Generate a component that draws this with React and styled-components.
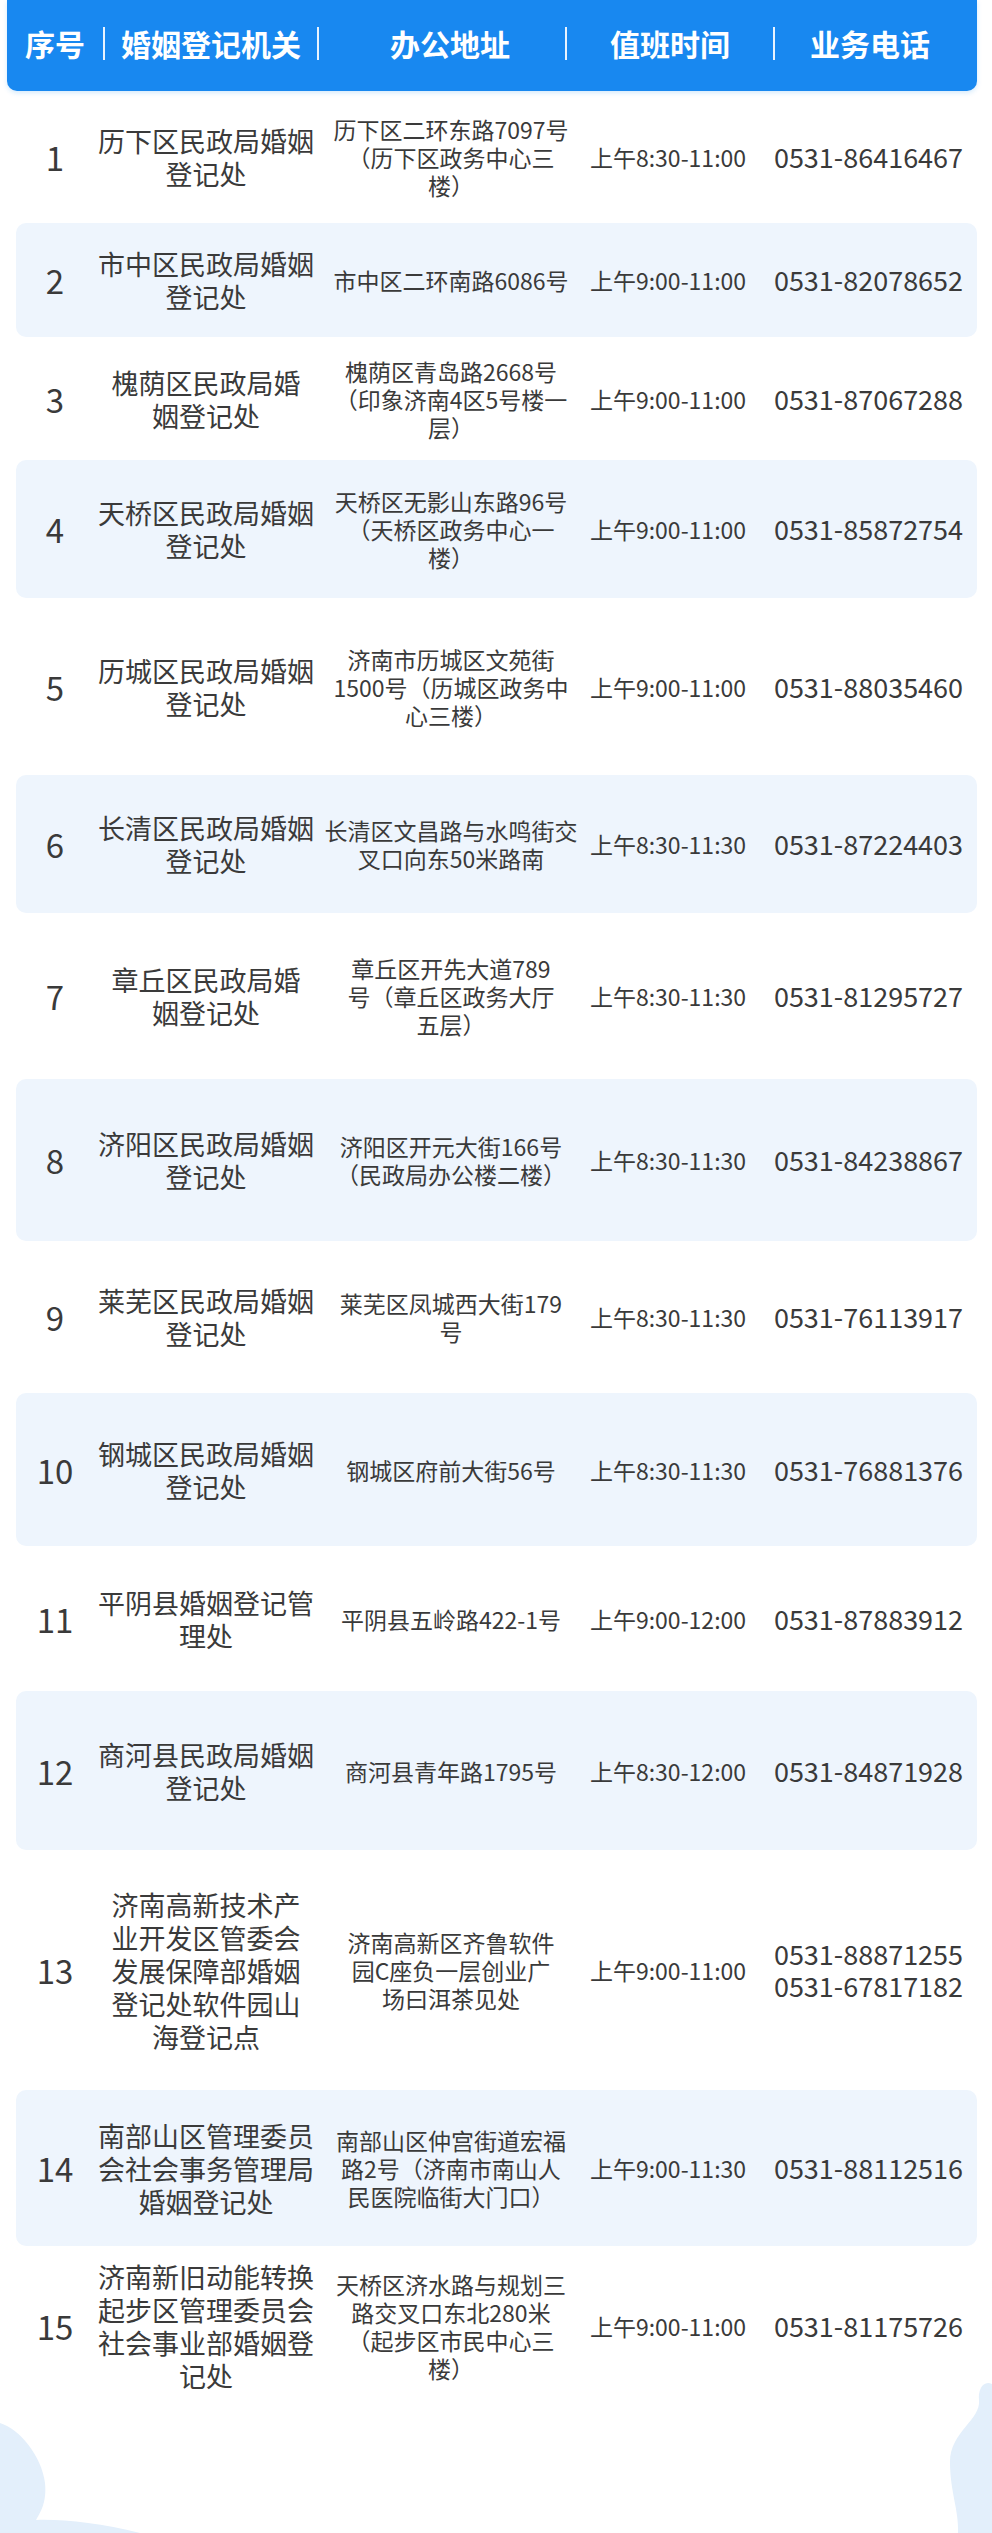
import React from 'react'
import styled, { createGlobalStyle } from 'styled-components'

const GlobalStyle = createGlobalStyle`
  html, body {
    margin: 0;
    padding: 0;
    background: #ffffff;
  }
  body {
    font-family: "Noto Sans CJK SC", "Noto Sans", sans-serif;
    color: #3a3a3a;
  }
`;

const Page = styled.div`
  width: 992px;
  min-height: 2533px;
  display: flex;
  flex-direction: column;
  background: #fff;
  overflow: hidden;
`;

// blue title bar
const Header = styled.div`
  display: grid;
  grid-template-columns: 96px 2px 212px 2px 246px 2px 206px 2px 1fr;
  align-items: center;
  height: 91px;
  padding-bottom: 5px;
  box-sizing: border-box;
  margin: 0 15px 0 7px;
  background: #1888f0;
  border-radius: 0 0 10px 10px;
  box-shadow: 0 2px 5px rgba(24, 136, 240, 0.18);
  color: #fff;
  font-size: 30px;
  font-weight: 700;
`;

const HeadCell = styled.div`
  text-align: center;
  white-space: nowrap;
  padding-left: ${props => props.$pl || 0}px;
  padding-right: ${props => props.$pr || 0}px;
`;

const Divider = styled.div`
  width: 2px;
  height: 33px;
  background: rgba(255, 255, 255, 0.9);
`;

const Row = styled.div`
  display: grid;
  grid-template-columns: 78px 224px 266px 168px 1fr;
  align-items: center;
  height: ${props => props.$h}px;
  margin: 0 15px 0 16px;
  border-radius: 10px;
  background: ${props => props.$shaded ? "#eef5fd" : "transparent"};
`;

const Num = styled.div`
  text-align: center;
  font-size: 33px;
  line-height: 40px;
`;

const Org = styled.div`
  text-align: center;
  font-size: 27px;
  line-height: 33px;
  white-space: nowrap;
`;

const Addr = styled.div`
  text-align: center;
  font-size: 23px;
  line-height: 28px;
  white-space: nowrap;
`;

const Time = styled.div`
  text-align: center;
  font-size: 23px;
  line-height: 28px;
  white-space: nowrap;
`;

const Tel = styled.div`
  text-align: center;
  font-size: 27px;
  line-height: 32px;
  white-space: nowrap;
  padding-left: 8px;
`;

const Line = styled.span`
  display: block;
`;

const Footer = styled.div`
  display: flex;
  justify-content: space-between;
  align-items: flex-end;
  height: 153px;
  margin-top: -26px;
`;

const rows = [
  { h: 132, org: ["历下区民政局婚姻", "登记处"], addr: ["历下区二环东路7097号", "（历下区政务中心三", "楼）"], time: "上午8:30-11:00", tel: ["0531-86416467"] },
  { h: 114, org: ["市中区民政局婚姻", "登记处"], addr: ["市中区二环南路6086号"], time: "上午9:00-11:00", tel: ["0531-82078652"] },
  { h: 123, org: ["槐荫区民政局婚", "姻登记处"], addr: ["槐荫区青岛路2668号", "（印象济南4区5号楼一", "层）"], time: "上午9:00-11:00", tel: ["0531-87067288"] },
  { h: 138, org: ["天桥区民政局婚姻", "登记处"], addr: ["天桥区无影山东路96号", "（天桥区政务中心一", "楼）"], time: "上午9:00-11:00", tel: ["0531-85872754"] },
  { h: 177, org: ["历城区民政局婚姻", "登记处"], addr: ["济南市历城区文苑街", "1500号（历城区政务中", "心三楼）"], time: "上午9:00-11:00", tel: ["0531-88035460"] },
  { h: 138, org: ["长清区民政局婚姻", "登记处"], addr: ["长清区文昌路与水鸣街交", "叉口向东50米路南"], time: "上午8:30-11:30", tel: ["0531-87224403"] },
  { h: 166, org: ["章丘区民政局婚", "姻登记处"], addr: ["章丘区开先大道789", "号（章丘区政务大厅", "五层）"], time: "上午8:30-11:30", tel: ["0531-81295727"] },
  { h: 162, org: ["济阳区民政局婚姻", "登记处"], addr: ["济阳区开元大街166号", "（民政局办公楼二楼）"], time: "上午8:30-11:30", tel: ["0531-84238867"] },
  { h: 152, org: ["莱芜区民政局婚姻", "登记处"], addr: ["莱芜区凤城西大街179", "号"], time: "上午8:30-11:30", tel: ["0531-76113917"] },
  { h: 153, org: ["钢城区民政局婚姻", "登记处"], addr: ["钢城区府前大街56号"], time: "上午8:30-11:30", tel: ["0531-76881376"] },
  { h: 145, org: ["平阴县婚姻登记管", "理处"], addr: ["平阴县五岭路422-1号"], time: "上午9:00-12:00", tel: ["0531-87883912"] },
  { h: 159, org: ["商河县民政局婚姻", "登记处"], addr: ["商河县青年路1795号"], time: "上午8:30-12:00", tel: ["0531-84871928"] },
  { h: 240, org: ["济南高新技术产", "业开发区管委会", "发展保障部婚姻", "登记处软件园山", "海登记点"], addr: ["济南高新区齐鲁软件", "园C座负一层创业广", "场曰洱茶见处"], time: "上午9:00-11:00", tel: ["0531-88871255", "0531-67817182"] },
  { h: 156, org: ["南部山区管理委员", "会社会事务管理局", "婚姻登记处"], addr: ["南部山区仲宫街道宏福", "路2号（济南市南山人", "民医院临街大门口）"], time: "上午9:00-11:30", tel: ["0531-88112516"] },
  { h: 160, org: ["济南新旧动能转换", "起步区管理委员会", "社会事业部婚姻登", "记处"], addr: ["天桥区济水路与规划三", "路交叉口东北280米", "（起步区市民中心三", "楼）"], time: "上午9:00-11:00", tel: ["0531-81175726"] },
];

const lines = (arr) => arr.map((t, i) => <Line key={i}>{t}</Line>);

const App = () => {
  return (
    <Page>
      <GlobalStyle />
      <Header>
        <HeadCell>序号</HeadCell>
        <Divider />
        <HeadCell>婚姻登记机关</HeadCell>
        <Divider />
        <HeadCell $pl={16}>办公地址</HeadCell>
        <Divider />
        <HeadCell>值班时间</HeadCell>
        <Divider />
        <HeadCell $pr={12}>业务电话</HeadCell>
      </Header>

      {rows.map((r, i) => (
        <Row key={i} $h={r.h} $shaded={i % 2 === 1}>
          <Num>{i + 1}</Num>
          <Org>{lines(r.org)}</Org>
          <Addr>{lines(r.addr)}</Addr>
          <Time>{r.time}</Time>
          <Tel>{lines(r.tel)}</Tel>
        </Row>
      ))}

      {/* light blue corner shapes */}
      <Footer>
        <svg width="140" height="110" viewBox="0 0 140 110">
          <path d="M0,0 C20,6 42,34 45,60 C47,80 40,90 36,97 C62,96 100,100 140,110 L0,110 Z" fill="#e3effb" />
        </svg>
        <svg width="45" height="153" viewBox="0 0 45 153">
          <path d="M45,4 C36,0 31,10 32,20 C34,40 3,52 3,82 C3,112 12,130 11,153 L45,153 Z" fill="#e3effb" />
        </svg>
      </Footer>
    </Page>
  )
}

export default App
